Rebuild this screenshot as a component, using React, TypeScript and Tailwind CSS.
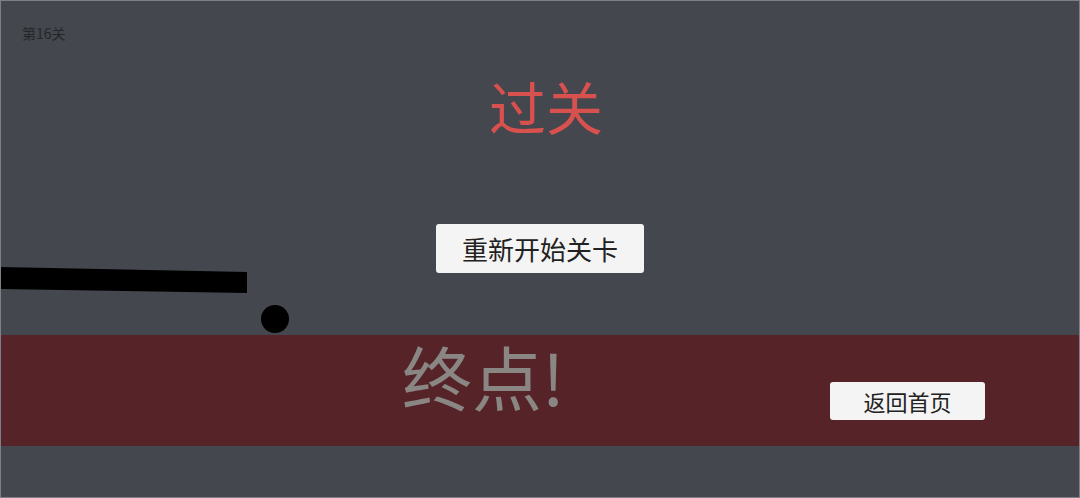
import React from "react";

const cjk = "font-['Noto_Sans_CJK_SC','Noto_Sans',sans-serif]";

// the slanted plank and the ball resting on the stage
const StageObjects = () => (
  <svg
    className="absolute left-0 top-0 pointer-events-none"
    width={300}
    height={340}
    viewBox="0 0 300 340">
    <polygon points="0,266 246,271 246,292 0,288" fill="#000" />
    <circle cx={274} cy={318} r={14} fill="#000" />
  </svg>
);

export default function App() {
  return (
    <div
      className={`relative w-[1080px] h-[498px] overflow-hidden bg-[#44474d] border border-[#7d8086] ${cjk}`}>
      <div className="flex flex-col h-[334px]">
        <div className="pl-[21px] pt-[22px] text-[14px] leading-[20px] text-[#25262a]">
          第16关
        </div>
        <div className="flex justify-center pl-[12px] mt-[34px]">
          <span className="text-[57px] leading-none text-[#d9514f]">
            过关
          </span>
        </div>
        <div className="flex justify-center mt-[90px]">
          <button
            type="button"
            className="w-[208px] h-[49px] rounded-[3px] bg-[#f4f4f4] text-[26px] leading-none text-[#222]">
            重新开始关卡
          </button>
        </div>
      </div>

      <div className="flex items-start h-[111px] bg-[#562428]">
        <span className="ml-[401px] mt-[6px] text-[70px] leading-none text-[#8a8683]">
          终点!
        </span>
        <button
          type="button"
          className="ml-auto mr-[94px] mt-[47px] w-[155px] h-[38px] rounded-[3px] bg-[#f4f4f4] text-[22px] leading-none text-[#222]">
          返回首页
        </button>
      </div>

      <StageObjects />
    </div>
  );
}
